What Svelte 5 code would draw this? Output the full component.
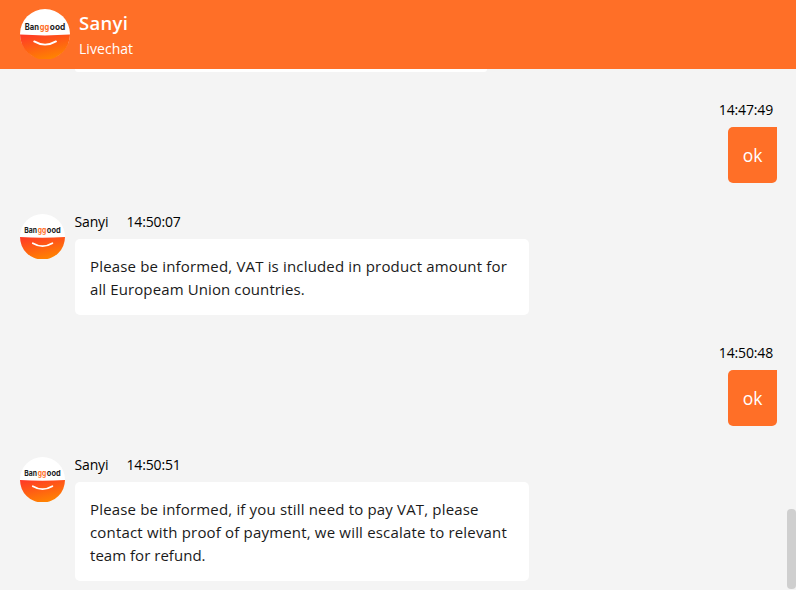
<script>
  const messages = [
    { own: true, time: '14:47:49', lines: [{ text: 'ok', spacing: 0 }] },
    {
      own: false,
      time: '14:50:07',
      lines: [
        { text: 'Please be informed, VAT is included in product amount for', spacing: 0.17 },
        { text: 'all Europeam Union countries.', spacing: 0.11 }
      ]
    },
    { own: true, time: '14:50:48', lines: [{ text: 'ok', spacing: 0 }] },
    {
      own: false,
      time: '14:50:51',
      lines: [
        { text: 'Please be informed, if you still need to pay VAT, please', spacing: 0.17 },
        { text: 'contact with proof of payment, we will escalate to relevant', spacing: 0.18 },
        { text: 'team for refund.', spacing: 0.03 }
      ]
    }
  ];
</script>

{#snippet avatar(size, id)}
  <svg class="avatar" width={size} height={size} viewBox="0 0 50 50">
    <defs>
      <linearGradient {id} x1="0.15" y1="0" x2="0.6" y2="1">
        <stop offset="0" stop-color="#ff3b26" />
        <stop offset="1" stop-color="#ff8500" />
      </linearGradient>
    </defs>
    <circle cx="25" cy="25" r="25" fill="#fff" />
    <path d="M0 25.6Q25 27.2 50 25.6A25 25 0 0 1 0 25.6Z" fill="url(#{id})" />
    <path d="M14.2 32.4Q25 38.8 36 32.4" fill="none" stroke="#fff" stroke-width="1.9" stroke-linecap="round" />
    <text x="4.8" y="21" textLength="14.2" lengthAdjust="spacingAndGlyphs">Ban</text>
    <text class="accent" x="19.7" y="21" textLength="9.4" lengthAdjust="spacingAndGlyphs">gg</text>
    <text x="29.8" y="21" textLength="15.4" lengthAdjust="spacingAndGlyphs">ood</text>
  </svg>
{/snippet}

<div class="chat">
  <header>
    {@render avatar(50, 'smile-head')}
    <div class="agent">
      <div class="title">Sanyi</div>
      <div class="sub">Livechat</div>
    </div>
  </header>
  <div class="body">
    <main>
      <div class="previous"></div>
      {#each messages as m, i}
        {#if m.own}
          <section class="own">
            <div class="meta">{m.time}</div>
            <div class="bubble">{m.lines[0].text}</div>
          </section>
        {:else}
          <section class="theirs">
            {@render avatar(45, 'smile-' + i)}
            <div>
              <div class="meta"><span class="who">Sanyi</span><span>{m.time}</span></div>
              <div class="bubble">
                {#each m.lines as line}
                  <div style:letter-spacing="{line.spacing}px">{line.text}</div>
                {/each}
              </div>
            </div>
          </section>
        {/if}
      {/each}
    </main>
    <div class="track"><div class="thumb"></div></div>
  </div>
</div>

<style>
  :global(body) { margin: 0; overflow: hidden; }
  .chat {
    width: 796px;
    height: 590px;
    overflow: hidden;
    display: flex;
    flex-direction: column;
    background: #f4f4f4;
    color: #1a1a1a;
    font-family: "Open Sans", "Noto Sans", sans-serif;
  }
  header {
    height: 69px;
    flex: none;
    box-sizing: border-box;
    padding: 9px 20px 0;
    display: flex;
    gap: 9px;
    background: #ff6f27;
    color: #fff;
  }
  .avatar { display: block; flex: none; }
  .avatar text { font: 700 8.8px Inter, "Noto Sans", sans-serif; fill: #1c1c1c; }
  .avatar .accent { fill: #ff6e26; }
  .title { font-size: 18.5px; font-weight: 600; line-height: 28px; letter-spacing: 0.3px; }
  .sub { font-size: 14px; line-height: 24px; letter-spacing: 0.05px; }
  .body { flex: 1; min-height: 0; display: flex; }
  main { flex: 1; min-width: 0; overflow: hidden; }
  .previous {
    width: 412px;
    height: 3px;
    margin-left: 75px;
    background: #fff;
    border-radius: 0 0 5px 5px;
  }
  section { display: flex; }
  .meta {
    height: 18px;
    line-height: 18px;
    font-size: 14px;
    letter-spacing: -0.15px;
    white-space: nowrap;
    color: #000;
  }
  .own {
    padding: 29px 10px 0 0;
    flex-direction: column;
    align-items: flex-end;
  }
  .own .meta { margin-right: 4px; }
  .own .bubble {
    width: 49px;
    height: 56px;
    margin-top: 8px;
    border-radius: 5px 0 5px 5px;
    background: #ff6f27;
    color: #fff;
    font-size: 17.5px;
    line-height: 57px;
    text-align: center;
  }
  .theirs { padding: 30px 0 0 20px; gap: 10px; align-items: flex-start; }
  .theirs .avatar { margin-top: 1px; }
  .theirs .meta { margin-left: -0.5px; }
  .who { display: inline-block; width: 52px; }
  .theirs .bubble {
    box-sizing: border-box;
    width: 454px;
    margin-top: 8px;
    padding: 16px 15px 14px;
    border-radius: 5px;
    background: #fff;
    font-size: 15px;
    line-height: 23px;
    white-space: nowrap;
  }
  .track { width: 9px; display: flex; align-items: flex-end; }
  .thumb { width: 9px; height: 80px; margin-bottom: 1px; border-radius: 4px; background: #cfcfcf; }
</style>
